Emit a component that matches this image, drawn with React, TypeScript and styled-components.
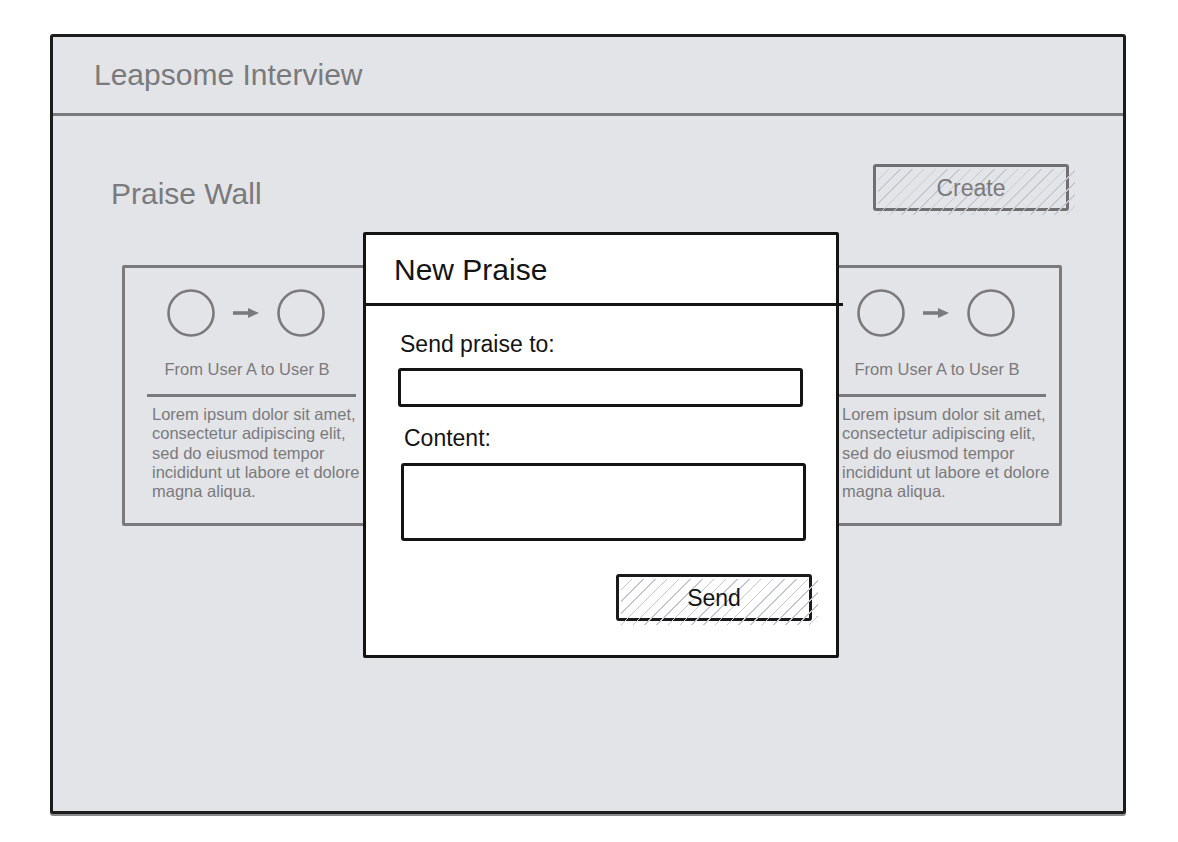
import React from "react";
import styled, { createGlobalStyle } from "styled-components";

const GlobalStyle = createGlobalStyle`
  html, body {
    margin: 0;
    padding: 0;
    background: #ffffff;
  }
  body {
    font-family: "Liberation Sans", Arial, Helvetica, sans-serif;
  }
  * {
    box-sizing: border-box;
  }
`;

const GRAY = "#7a7a7c";
const INK = "#141414";
const HATCH = "#c6c8d0";

const Page = styled.div`
  padding: 34px 0 0 50px;
  width: 1178px;
  height: 842px;
`;

const Frame = styled.div`
  position: relative;
  width: 1076px;
  height: 780px;
  border: 3px solid #1c1c1c;
  border-radius: 3px;
  background: #e3e4e8;
  box-shadow: 0 2px 0 #8a8a8a;
`;

const Header = styled.header`
  height: 79px;
  display: flex;
  align-items: center;
  padding-left: 41px;
  border-bottom: 3px solid ${GRAY};
`;

const AppTitle = styled.h1`
  margin: 0;
  font-size: 30px;
  font-weight: 400;
  color: ${GRAY};
`;

const Content = styled.main`
  padding: 48px 54px 0 58px;
`;

const TopBar = styled.div`
  display: flex;
  justify-content: space-between;
  align-items: flex-start;
`;

const WallTitle = styled.h2`
  margin: 13px 0 0;
  font-size: 30px;
  font-weight: 400;
  line-height: 33px;
  color: ${GRAY};
`;

const HatchButton = styled.button<{ $tone: "muted" | "ink" }>`
  position: relative;
  z-index: 0;
  width: 196px;
  height: 47px;
  padding: 2px 0 0;
  border: 3px solid ${({ $tone }) => ($tone === "ink" ? "#1a1a1a" : "#707072")};
  border-radius: 3px;
  background: transparent;
  font-family: inherit;
  font-size: 23px;
  color: ${({ $tone }) => ($tone === "ink" ? INK : GRAY)};
  cursor: pointer;

  &::before {
    content: "";
    position: absolute;
    z-index: -1;
    inset: 2px -9px -7px 2px;
    background: repeating-linear-gradient(
      135deg,
      transparent 0 7.2px,
      ${HATCH} 7.2px 8.3px
    );
    pointer-events: none;
  }
`;

const CardRow = styled.ul`
  list-style: none;
  margin: 54px 0 0;
  padding: 0 7px 0 11px;
  display: grid;
  grid-template-columns: repeat(3, 250px);
  justify-content: space-between;
`;

const Card = styled.li`
  height: 261px;
  border: 3px solid ${GRAY};
  border-radius: 2px;
  padding-top: 21px;
  display: flex;
  flex-direction: column;
  align-items: stretch;
`;

const Avatars = styled.div`
  display: flex;
  justify-content: center;
  align-items: center;
  gap: 18px;
  margin-left: -3px;
`;

const FromTo = styled.p`
  margin: 23px 0 0;
  text-align: center;
  font-size: 16.5px;
  line-height: 19px;
  color: ${GRAY};
`;

const Divider = styled.hr`
  margin: 15px 13px 0 22px;
  border: none;
  border-top: 3px solid ${GRAY};
`;

const Body = styled.p`
  margin: 8px 0 0 27px;
  width: 215px;
  font-size: 16.5px;
  line-height: 19.3px;
  color: ${GRAY};
`;

const Avatar = () => (
  <svg width="48" height="48" viewBox="0 0 48 48">
    <circle cx="24" cy="24" r="22.5" fill="none" stroke={GRAY} strokeWidth="2.6" />
  </svg>
);

const Arrow = () => (
  <svg width="26" height="12" viewBox="0 0 26 12">
    <line x1="0" y1="6" x2="18" y2="6" stroke={GRAY} strokeWidth="3.6" />
    <polygon points="15,1 26,6 15,11" fill={GRAY} />
  </svg>
);

const LOREM =
  "Lorem ipsum dolor sit amet, consectetur adipiscing elit, sed do eiusmod tempor incididunt ut labore et dolore magna aliqua.";

const PraiseCard: React.FC<{ from: string; to: string; text: string }> = ({
  from,
  to,
  text,
}) => (
  <Card>
    <Avatars>
      <Avatar />
      <Arrow />
      <Avatar />
    </Avatars>
    <FromTo>
      From {from} to {to}
    </FromTo>
    <Divider />
    <Body>{text}</Body>
  </Card>
);

const Modal = styled.section`
  position: absolute;
  left: 310px;
  top: 195px;
  width: 476px;
  height: 426px;
  background: #ffffff;
  border: 3px solid ${INK};
  border-radius: 2px;
`;

const ModalHeader = styled.div`
  position: relative;
  height: 69px;
  display: flex;
  align-items: center;
  padding-left: 28px;

  &::after {
    content: "";
    position: absolute;
    left: -1px;
    right: -7px;
    bottom: -2px;
    height: 3px;
    background: ${INK};
  }
`;

const ModalTitle = styled.h3`
  margin: 0;
  font-size: 30px;
  font-weight: 400;
  color: ${INK};
`;

const Form = styled.form`
  display: flex;
  flex-direction: column;
  padding: 27px 33px 0 32px;
`;

const Label = styled.label<{ $nudge: number; $gap: number }>`
  margin: ${({ $gap }) => $gap}px 0 0 ${({ $nudge }) => $nudge}px;
  font-size: 23px;
  line-height: 27px;
  color: ${INK};
`;

const TextInput = styled.input`
  margin-top: 10px;
  height: 39px;
  border: 3px solid ${INK};
  border-radius: 3px;
  background: #ffffff;
  outline: none;
`;

const TextArea = styled.textarea`
  display: block;
  margin: 11px -3px 0 3px;
  height: 78px;
  border: 3px solid ${INK};
  border-radius: 3px;
  background: #ffffff;
  resize: none;
  outline: none;
`;

const Actions = styled.div`
  display: flex;
  justify-content: flex-end;
  margin: 33px -9px 0 0;
`;

export default function App() {
  return (
    <Page>
      <GlobalStyle />
      <Frame>
        <Header>
          <AppTitle>Leapsome Interview</AppTitle>
        </Header>
        <Content>
          <TopBar>
            <WallTitle>Praise Wall</WallTitle>
            <HatchButton $tone="muted">Create</HatchButton>
          </TopBar>
          <CardRow>
            <PraiseCard from="User A" to="User B" text={LOREM} />
            <PraiseCard from="User A" to="User B" text={LOREM} />
            <PraiseCard from="User A" to="User B" text={LOREM} />
          </CardRow>
        </Content>
        <Modal>
          <ModalHeader>
            <ModalTitle>New Praise</ModalTitle>
          </ModalHeader>
          <Form onSubmit={(e) => e.preventDefault()}>
            <Label $nudge={2} $gap={0} htmlFor="to">
              Send praise to:
            </Label>
            <TextInput id="to" />
            <Label $nudge={6} $gap={18} htmlFor="content">
              Content:
            </Label>
            <TextArea id="content" />
            <Actions>
              <HatchButton $tone="ink" type="submit">
                Send
              </HatchButton>
            </Actions>
          </Form>
        </Modal>
      </Frame>
    </Page>
  );
}
